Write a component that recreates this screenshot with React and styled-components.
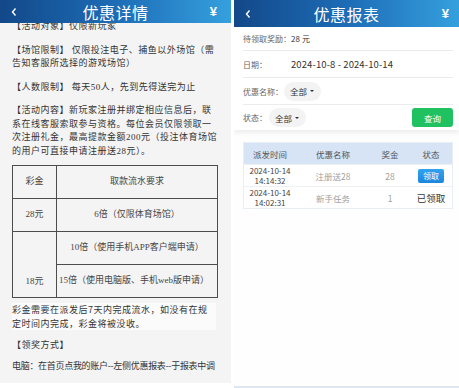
import styled, { createGlobalStyle } from "styled-components";

const GlobalStyle = createGlobalStyle`
  html, body {
    margin: 0;
    padding: 0;
    background: #ffffff;
  }
  body {
    font-family: "Noto Sans CJK SC", "Noto Sans", sans-serif;
  }
`;

const Screen = styled.div`
  display: flex;
  gap: 3px;
  width: 459px;
  height: 388px;
  overflow: hidden;
  background: #ffffff;
`;

const Phone = styled.div`
  display: flex;
  flex-direction: column;
  flex: ${(p) => (p.$fixed ? `0 0 ${p.$fixed}px` : "1")};
  height: ${(p) => p.$height}px;
  background: ${(p) => p.$bg};
  overflow: hidden;
`;

const Header = styled.div`
  flex: 0 0 ${(p) => p.$h}px;
  display: grid;
  grid-template-columns: 1fr auto 1fr;
  align-items: center;
  background: linear-gradient(to right, #134889 0%, #1d6cb6 50%, #35a0de 100%);
  color: #ffffff;
  z-index: 2;
`;

const Title = styled.div`
  text-align: center;
  font-size: 16px;
  line-height: 1;
  letter-spacing: 0.5px;
`;

const BackIcon = styled.svg`
  justify-self: start;
  margin-left: 10px;
  width: 8px;
  height: 10px;
`;

const Yuan = styled.div`
  justify-self: end;
  margin-right: ${(p) => p.$right}px;
  font-family: "Liberation Sans", sans-serif;
  font-size: 13px;
  font-weight: 700;
`;

function TopBar({ title, h, right }) {
  return (
    <Header $h={h}>
      <BackIcon viewBox="0 0 8 10">
        <polyline
          points="5.5,1.5 2.5,5 5.5,8.5"
          fill="none"
          stroke="#fff"
          strokeWidth="1.4"
        />
      </BackIcon>
      <Title>{title}</Title>
      <Yuan $right={right}>¥</Yuan>
    </Header>
  );
}

/* ---------- left: 优惠详情 ---------- */

const Article = styled.div`
  flex: 1;
  padding: 0 12px 0 12px;
  margin-top: -3px;
  overflow: hidden;
  color: #333;
  font-family: "Liberation Serif", "Noto Sans CJK SC", serif;
  font-size: 9px;
  line-height: 13.5px;
  letter-spacing: 0.5px;
`;

const Para = styled.p`
  margin: 0 ${(p) => p.$inset ?? 0}px ${(p) => p.$gap ?? 10}px 0;
  font-family: ${(p) =>
    p.$sans ? `"Noto Sans CJK SC", sans-serif` : "inherit"};
  letter-spacing: ${(p) => (p.$spacing != null ? `${p.$spacing}px` : "inherit")};
  background: ${(p) => (p.$highlight ? "#fbfbfb" : "transparent")};
`;

const SafeArea = styled.div`
  flex: 0 0 9px;
`;

const RuleTable = styled.table`
  width: 206px;
  border-collapse: collapse;
  margin: 2px 0 5px;
  color: #444;
  font-size: 9px;
  letter-spacing: 0;
  text-align: center;

  td {
    border: 1px solid #4d4d4d;
    padding: 0;
    height: 32px;
  }
`;

const AmountCell = styled.td`
  width: 43px;
  vertical-align: ${(p) => (p.$bottom ? "bottom" : "middle")};
  line-height: ${(p) => (p.$bottom ? "32px" : "inherit")};
`;

const WideCell = styled.td`
  text-align: ${(p) => (p.$left ? "left" : "center")};
  padding-left: ${(p) => (p.$left ? "2px" : "0")} !important;
`;

/* ---------- right: 优惠报表 ---------- */

const Filters = styled.div`
  padding: 0 6px 0 9px;
  background: #fff;
  box-shadow: 0 3px 5px rgba(0, 0, 0, 0.07);
  z-index: 1;
`;

const FilterRow = styled.div`
  display: flex;
  align-items: center;
  height: ${(p) => p.$h}px;
  border-bottom: ${(p) => (p.$last ? "none" : "1px solid #ececec")};
  font-size: 8px;
  color: #666;
  white-space: nowrap;
`;

const Label = styled.span`
  width: ${(p) => (p.$w ? `${p.$w}px` : "auto")};
  flex: none;
`;

const Value = styled.span`
  color: #333;
  font-size: ${(p) => (p.$small ? "8px" : "9.5px")};
  letter-spacing: 0.1px;
`;

const Pill = styled.span`
  display: inline-flex;
  align-items: center;
  gap: 3px;
  height: 19px;
  padding: 0 7px 0 6px;
  border-radius: 10px;
  background: #f3f3f3;
  color: #333;
  font-size: 8.5px;

  &::after {
    content: "";
    border-left: 2px solid transparent;
    border-right: 2px solid transparent;
    border-top: 2.5px solid #333;
  }
`;

const SearchBtn = styled.button`
  margin-left: auto;
  width: 41px;
  height: 19px;
  border: none;
  border-radius: 3px;
  background: #1fc160;
  color: #fff;
  font-family: "Noto Sans CJK SC", sans-serif;
  font-size: 8.5px;
  padding: 0;
`;

const ListArea = styled.div`
  flex: 1;
  padding: 12px 6px 0 9px;
  background: #fefefe;
`;

const Card = styled.div`
  border: 1px solid #e9eef4;
  background: #fff;
`;

const GridRow = styled.div`
  display: grid;
  grid-template-columns: 52px 74px 40px 1fr;
  align-items: center;
  height: 21px;
  background: ${(p) => (p.$head ? "#d6e4f5" : "#fff")};
  border-top: ${(p) => (p.$head ? "none" : "1px solid #eef0f3")};
  font-size: 8.5px;
  color: ${(p) => (p.$head ? "#555" : "#444")};
  text-align: center;
`;

const Stamp = styled.div`
  display: flex;
  flex-direction: column;
  font-size: 8px;
  line-height: 9.5px;
  color: #444;
`;

const Muted = styled.div`
  color: #a0a0a0;
`;

const ClaimBtn = styled.span`
  justify-self: center;
  display: inline-block;
  width: 26px;
  height: 14px;
  line-height: 14px;
  border-radius: 2px;
  background: linear-gradient(#31a3ef, #1d86dd);
  color: #fff;
  font-size: 8px;
`;

const Claimed = styled.div`
  color: #333;
  font-size: 9.5px;
`;

const BottomLine = styled.div`
  flex: 0 0 2px;
  background: #dde7f2;
`;

const records = [
  { date: "2024-10-14", time: "14:14:32", name: "注册送28", amount: "28", claimed: false },
  { date: "2024-10-14", time: "14:02:31", name: "新手任务", amount: "1", claimed: true },
];

export default function App() {
  return (
    <>
      <GlobalStyle />
      <Screen>
        <Phone $fixed={231} $height={383} $bg="#f4f4f4">
          <TopBar title="优惠详情" h={23} right={14} />
          <Article>
            <Para>【活动对象】仅限新玩家</Para>
            <Para>【场馆限制】 仅限投注电子、捕鱼以外场馆（需告知客服所选择的游戏场馆）</Para>
            <Para>【人数限制】 每天50人，先到先得送完为止</Para>
            <Para $gap={7}>
              【活动内容】新玩家注册并绑定相应信息后，联系在线客服索取参与资格。每位会员仅限领取一次注册礼金，最高提款金额200元（投注体育场馆的用户可直接申请注册送28元）。
            </Para>
            <RuleTable>
              <tbody>
                <tr>
                  <AmountCell>彩金</AmountCell>
                  <WideCell>取款流水要求</WideCell>
                </tr>
                <tr>
                  <AmountCell>28元</AmountCell>
                  <WideCell>6倍（仅限体育场馆）</WideCell>
                </tr>
                <tr>
                  <AmountCell rowSpan={2} $bottom>
                    18元
                  </AmountCell>
                  <WideCell>10倍（使用手机APP客户端申请）</WideCell>
                </tr>
                <tr>
                  <WideCell $left>15倍（使用电脑版、手机web版申请）</WideCell>
                </tr>
              </tbody>
            </RuleTable>
            <Para $sans $highlight $gap={8} $inset={3}>
              彩金需要在派发后7天内完成流水，如没有在规定时间内完成，彩金将被没收。
            </Para>
            <Para $sans $gap={7}>【领奖方式】</Para>
            <Para $sans $spacing={-0.3}>
              电脑：在首页点我的账户--左侧优惠报表--于报表中调取领取，待审核成功后，彩金将自动派发至账户。
            </Para>
          </Article>
          <SafeArea />
        </Phone>

        <Phone $height={388} $bg="#fefefe">
          <TopBar title="优惠报表" h={27} right={10} />
          <Filters>
            <FilterRow $h={23}>
              <Label>待领取奖励：</Label>
              <Value $small>28 元</Value>
            </FilterRow>
            <FilterRow $h={26}>
              <Label $w={48}>日期：</Label>
              <Value>2024-10-8 - 2024-10-14</Value>
            </FilterRow>
            <FilterRow $h={26}>
              <Label $w={41}>优惠名称：</Label>
              <Pill>全部</Pill>
            </FilterRow>
            <FilterRow $h={25} $last>
              <Label $w={26}>状态：</Label>
              <Pill>全部</Pill>
              <SearchBtn>查询</SearchBtn>
            </FilterRow>
          </Filters>
          <ListArea>
            <Card>
              <GridRow $head>
                <div>派发时间</div>
                <div>优惠名称</div>
                <div>奖金</div>
                <div>状态</div>
              </GridRow>
              {records.map((r) => (
                <GridRow key={r.time}>
                  <Stamp>
                    <span>{r.date}</span>
                    <span>{r.time}</span>
                  </Stamp>
                  <Muted>{r.name}</Muted>
                  <Muted>{r.amount}</Muted>
                  {r.claimed ? <Claimed>已领取</Claimed> : <ClaimBtn>领取</ClaimBtn>}
                </GridRow>
              ))}
            </Card>
          </ListArea>
          <BottomLine />
        </Phone>
      </Screen>
    </>
  );
}
